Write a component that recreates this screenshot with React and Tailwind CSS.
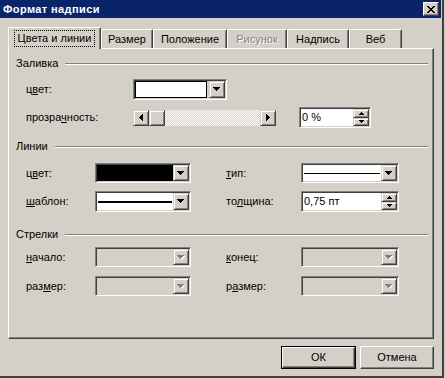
import React from 'react';

const raised =
  'border border-t-white border-l-white border-r-[#404040] border-b-[#404040] bg-[#d4d0c8] shadow-[inset_-1px_-1px_0_#808080]';
const raisedSm =
  'border border-t-[#d4d0c8] border-l-[#d4d0c8] border-r-[#404040] border-b-[#404040] bg-[#d4d0c8] shadow-[inset_1px_1px_0_#fff,inset_-1px_-1px_0_#808080]';
const sunken =
  'border border-t-[#808080] border-l-[#808080] border-r-white border-b-white p-px shadow-[inset_1px_1px_0_#404040,inset_-1px_-1px_0_#d4d0c8]';

function DownArrow({ disabled }) {
  return (
    <svg width="8" height="5" viewBox="0 0 8 5" shapeRendering="crispEdges">
      {disabled && <path d="M1 1h7v1H1zM2 2h5v1H2zM3 3h3v1H3zM4 4h1v1H4z" fill="#fff" />}
      <path d="M0 0h7v1H0zM1 1h5v1H1zM2 2h3v1H2zM3 3h1v1H3z" fill={disabled ? '#808080' : '#000'} />
    </svg>
  );
}

function SideArrow({ right }) {
  return (
    <svg width="4" height="7" viewBox="0 0 4 7" shapeRendering="crispEdges">
      {right ? (
        <path d="M0 0h1v7H0zM1 1h1v5H1zM2 2h1v3H2zM3 3h1v1H3z" fill="#000" />
      ) : (
        <path d="M3 0h1v7H3zM2 1h1v5H2zM1 2h1v3H1zM0 3h1v1H0z" fill="#000" />
      )}
    </svg>
  );
}

function SmallArrow({ up }) {
  return (
    <svg width="5" height="3" viewBox="0 0 5 3" shapeRendering="crispEdges">
      {up ? (
        <path d="M2 0h1v1H2zM1 1h3v1H1zM0 2h5v1H0z" fill="#000" />
      ) : (
        <path d="M0 0h5v1H0zM1 1h3v1H1zM2 2h1v1H2z" fill="#000" />
      )}
    </svg>
  );
}

function Combo({ className, disabled, children }) {
  return (
    <div className={`${sunken} flex ${className}`}>
      <div className={`flex flex-1 items-center ${disabled ? 'bg-[#d4d0c8]' : 'bg-white'}`}>{children}</div>
      <div className={`${raisedSm} flex w-[16px] items-center justify-center`}>
        <DownArrow disabled={disabled} />
      </div>
    </div>
  );
}

function Spin({ value, className }) {
  return (
    <div className={`${sunken} flex h-[21px] ${className}`}>
      <div className="flex flex-1 items-center bg-white pl-px">{value}</div>
      <div className="flex w-[16px] flex-col">
        <div className={`${raisedSm} flex flex-1 items-center justify-center`}>
          <SmallArrow up />
        </div>
        <div className={`${raisedSm} flex flex-1 items-center justify-center`}>
          <SmallArrow />
        </div>
      </div>
    </div>
  );
}

function Section({ title, className }) {
  return (
    <div className={`flex h-[13px] items-center pl-[7px] pr-[5px] ${className}`}>
      <span>{title}</span>
      <div className="ml-[7px] h-[2px] flex-1 border-t border-b border-t-[#808080] border-b-white" />
    </div>
  );
}

function Tab({ className, disabled, children }) {
  return (
    <div
      className={`flex h-[19px] items-center justify-center rounded-t-[2px] border-l border-t border-r border-l-white border-t-white border-r-[#404040] shadow-[inset_-1px_0_0_#808080] ${className} ${
        disabled ? 'text-[#808080] [text-shadow:1px_1px_0_#fff]' : ''
      }`}
    >
      {children}
    </div>
  );
}

export default function App() {
  return (
    <div className="h-[378px] w-[446px] bg-[#d4d0c8] font-['Liberation_Sans',Arial,sans-serif] text-[11px] leading-[13px] text-black">
      <div className="flex h-[378px] w-[444px] flex-col border-r-2 border-b-2 border-r-[#404040] border-b-[#404040]">
        {/* Title bar */}
        <div className="mr-[1px] flex h-[18px] items-center justify-between bg-[#0a246a] pl-[3px] pr-[2px]">
          <span className="font-bold tracking-[0.4px] text-white">Формат надписи</span>
          <div className={`${raised} flex h-[14px] w-[16px] items-center justify-center`}>
            <svg width="8" height="7" viewBox="0 0 8 7" shapeRendering="crispEdges">
              <path
                d="M0 0h2v1H0zM6 0h2v1H6zM1 1h2v1H1zM5 1h2v1H5zM2 2h4v1H2zM3 3h2v1H3zM2 4h4v1H2zM1 5h2v1H1zM5 5h2v1H5zM0 6h2v1H0zM6 6h2v1H6z"
                fill="#000"
              />
            </svg>
          </div>
        </div>

        {/* Tabs */}
        <div className="ml-[8px] mt-[9px] flex h-[21px] items-end">
          <div className="relative z-10 -mb-px flex h-[22px] w-[93px] items-center justify-center rounded-t-[2px] border-l border-t border-r border-l-white border-t-white border-r-[#404040] bg-[#d4d0c8] shadow-[inset_-1px_0_0_#808080]">
            <span className="border border-dotted border-black px-[3px] py-px">Цвета и линии</span>
          </div>
          <Tab className="w-[52px]">Размер</Tab>
          <Tab className="w-[74px]">Положение</Tab>
          <Tab className="w-[60px]" disabled>
            Рисунок
          </Tab>
          <Tab className="w-[62px]">Надпись</Tab>
          <Tab className="w-[53px]">Веб</Tab>
        </div>

        {/* Panel */}
        <div className="ml-[8px] flex h-[291px] w-[426px] flex-col border border-l-white border-t-white border-r-[#404040] border-b-[#404040] shadow-[inset_-1px_-1px_0_#808080]">
          <Section title="Заливка" className="mt-[8px]" />
          <div className="mt-[9px] flex h-[21px] items-center pl-[17px]">
            <span className="w-[107px]">
              ц<u>в</u>ет:
            </span>
            <div className={`${sunken} flex h-[21px] w-[94px]`}>
              <div className="flex flex-1 bg-[#d4d0c8] pr-[2px]">
                <div className="flex-1 border border-black bg-white" />
              </div>
              <div className={`${raisedSm} flex w-[16px] items-center justify-center`}>
                <DownArrow />
              </div>
            </div>
          </div>
          <div className="mt-[7px] flex h-[21px] items-center pl-[17px]">
            <span className="w-[107px]">
              прозра<u>ч</u>ность:
            </span>
            <div className="flex h-[16px] w-[143px]">
              <div className={`${raisedSm} flex w-[16px] items-center justify-center`}>
                <SideArrow />
              </div>
              <div className={`${raisedSm} w-[16px]`} />
              <div className="flex-1 bg-[repeating-conic-gradient(#ffffff_0_25%,#d4d0c8_0_50%)] bg-size-[2px_2px]" />
              <div className={`${raisedSm} flex w-[16px] items-center justify-center`}>
                <SideArrow right />
              </div>
            </div>
            <div className="ml-[23px]">
              <Spin value="0 %" className="w-[72px]" />
            </div>
          </div>

          <Section title="Линии" className="mt-[12px]" />
          <div className="mt-[10px] flex h-[20px] items-center pl-[17px]">
            <span className="w-[69px]">
              ц<u>в</u>ет:
            </span>
            <Combo className="h-[20px] w-[96px]">
              <div className="h-full w-full bg-black" />
            </Combo>
            <span className="ml-[35px] w-[75px]">
              <u>т</u>ип:
            </span>
            <Combo className="h-[20px] w-[98px]">
              <div className="mx-px h-px w-full bg-black" />
            </Combo>
          </div>
          <div className="mt-[8px] flex h-[21px] items-center pl-[17px]">
            <span className="w-[69px]">
              <u>ш</u>аблон:
            </span>
            <Combo className="h-[21px] w-[96px]">
              <div className="mx-px h-[2px] w-full bg-black" />
            </Combo>
            <span className="ml-[35px] w-[75px]">
              то<u>л</u>щина:
            </span>
            <Spin value="0,75 пт" className="w-[98px]" />
          </div>

          <Section title="Стрелки" className="mt-[16px]" />
          <div className="mt-[6px] flex h-[20px] items-center pl-[17px]">
            <span className="w-[69px]">
              <u>н</u>ачало:
            </span>
            <Combo className="h-[20px] w-[96px]" disabled />
            <span className="ml-[35px] w-[75px]">
              <u>к</u>онец:
            </span>
            <Combo className="h-[20px] w-[98px]" disabled />
          </div>
          <div className="mt-[9px] flex h-[20px] items-center pl-[17px]">
            <span className="w-[69px]">
              раз<u>м</u>ер:
            </span>
            <Combo className="h-[20px] w-[96px]" disabled />
            <span className="ml-[35px] w-[75px]">
              р<u>а</u>змер:
            </span>
            <Combo className="h-[20px] w-[98px]" disabled />
          </div>
        </div>

        {/* Buttons */}
        <div className="mt-[7px] flex justify-end gap-[4px] pr-[8px]">
          <div className="h-[23px] w-[75px] border border-black">
            <div className={`${raised} flex h-full w-full items-center justify-center`}>ОК</div>
          </div>
          <div className={`${raised} flex h-[23px] w-[74px] items-center justify-center`}>Отмена</div>
        </div>
      </div>
    </div>
  );
}
